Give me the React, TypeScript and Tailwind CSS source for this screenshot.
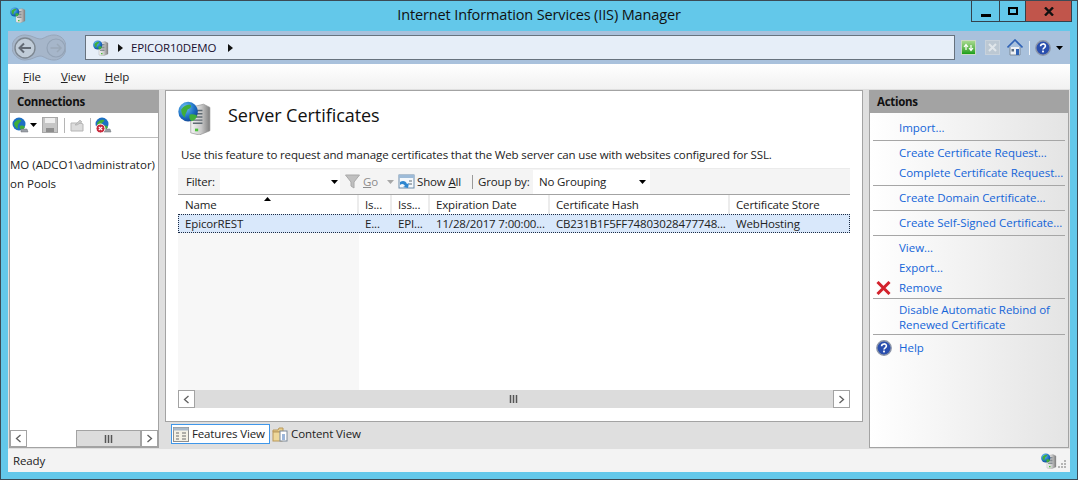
import React from "react";

function Server({ s = 16 }: { s?: number }) {
  return (
    <svg width={s} height={s} viewBox="0 0 32 32" className="shrink-0">
      <defs>
        <linearGradient id="srv" x1="0" x2="1" y1="0" y2="0">
          <stop offset="0" stopColor="#f4f4f4" />
          <stop offset="0.55" stopColor="#c9c9c9" />
          <stop offset="1" stopColor="#7e7e7e" />
        </linearGradient>
        <radialGradient id="glb" cx="0.35" cy="0.3" r="0.8">
          <stop offset="0" stopColor="#6fc4f5" />
          <stop offset="0.6" stopColor="#1d6fc4" />
          <stop offset="1" stopColor="#123f8a" />
        </radialGradient>
      </defs>
      <path d="M12 6 L24 3 L30 6 L30 28 L20 32 L12 30 Z" fill="url(#srv)" stroke="#8c8c8c" strokeWidth="0.6" />
      <path d="M14 9h9M14 12h9M14 15h9M14 18h9M14 21h9" stroke="#5e6a72" strokeWidth="1.3" />
      <rect x="16" y="26" width="3" height="2.5" fill="#4cc23a" />
      <circle cx="9.5" cy="10" r="9.2" fill="url(#glb)" />
      <path d="M3 8c3-4 7-5 9-4 1 2-1 3-3 4-1 3-3 5-2 8-3-2-4-5-4-8ZM11 13c3-1 6 0 7 1-1 3-3 4-5 5-2-1-3-4-2-6Z" fill="#3fae3a" />
    </svg>
  );
}

function Globe({ x = false }: { x?: boolean }) {
  return (
    <svg width="17" height="17" viewBox="0 0 17 17" className="shrink-0">
      <circle cx="7" cy="7" r="6.5" fill="#1d6fc4" />
      <path d="M2 6c2-3 5-4 7-3 1 1-1 2-2 3-1 2-2 3-1 6-2-1-4-3-4-6ZM8 9c2-1 4 0 5 1-1 2-2 3-4 3-1-1-2-3-1-4Z" fill="#3fae3a" />
      <path d="M9 12h6l1 3H9Z" fill="#9a9fa6" stroke="#6d7278" strokeWidth="0.5" />
      {x && (
        <g>
          <circle cx="5.5" cy="11.5" r="4.5" fill="#c8283a" stroke="#fff" />
          <path d="M3.8 9.8l3.4 3.4M7.2 9.8l-3.4 3.4" stroke="#fff" strokeWidth="1.2" />
        </g>
      )}
    </svg>
  );
}

function Sep() {
  return <div className="mx-[3px] h-px bg-[#a6a6a6]" />;
}

function Action({ children, h = 20, icon }: { children: React.ReactNode; h?: number; icon?: React.ReactNode }) {
  return (
    <div className="flex items-center pl-[6px]" style={{ height: h }}>
      <div className="w-[23px] shrink-0 flex items-center">{icon}</div>
      <span className="text-[#1565d8] whitespace-nowrap tracking-[-0.03px]">{children}</span>
    </div>
  );
}

function Help({ s = 16 }: { s?: number }) {
  return (
    <svg width={s} height={s} viewBox="0 0 16 16" className="shrink-0">
      <circle cx="8" cy="8" r="7.2" fill="#2a4fae" stroke="#8d96a8" strokeWidth="1.4" />
      <path d="M5.6 6.2c0-3 4.8-3 4.8-.2 0 1.8-2.4 1.8-2.4 3.6" fill="none" stroke="#fff" strokeWidth="1.6" />
      <rect x="7.1" y="10.6" width="1.8" height="1.8" fill="#fff" />
    </svg>
  );
}

function Head({ w, children, first = false }: { w: number; children: string; first?: boolean }) {
  return (
    <div className={`h-full shrink-0 flex items-center border-r-2 border-[#ececec] ${first ? "pl-[7px]" : "pl-[6px]"}`} style={{ width: w }}>
      {children}
    </div>
  );
}

function Cell({ w, children }: { w: number; children: string }) {
  return (
    <div className="shrink-0 pl-[6px] whitespace-nowrap leading-[17px]" style={{ width: w }}>
      {children}
    </div>
  );
}

function ScrollBtn({ dir }: { dir: "l" | "r" }) {
  return (
    <div className="h-full w-[17px] shrink-0 bg-white border border-[#a3a3a3] flex items-center justify-center">
      <svg width="7" height="9" viewBox="0 0 7 9">
        <path d={dir === "l" ? "M5.5 1 L1.5 4.5 L5.5 8" : "M1.5 1 L5.5 4.5 L1.5 8"} fill="none" stroke="#606060" strokeWidth="1.3" />
      </svg>
    </div>
  );
}

function Grip() {
  return (
    <svg width="9" height="8" viewBox="0 0 9 8">
      <path d="M1.5 0v8M4.5 0v8M7.5 0v8" stroke="#555" strokeWidth="1.5" />
    </svg>
  );
}

function Caret({ c = "#000", up = false }: { c?: string; up?: boolean }) {
  return (
    <svg width="7" height="4" viewBox="0 0 7 4" className="shrink-0">
      <path d={up ? "M0 4h7L3.5 0Z" : "M0 0h7L3.5 4Z"} fill={c} />
    </svg>
  );
}

function CrumbArrow() {
  return (
    <svg width="5" height="8" viewBox="0 0 5 8" className="shrink-0">
      <path d="M0 0l5 4-5 4Z" fill="#111" />
    </svg>
  );
}

export default function App() {
  return (
    <div
      className="w-[1078px] h-[480px] bg-[#63c8ea] border border-[#3b4a55] flex flex-col overflow-hidden text-[11.5px] tracking-[-0.15px] leading-none text-[#1b1b1b]"
      style={{ fontFamily: '"Open Sans", "Noto Sans", sans-serif' }}
    >
      {/* title bar */}
      <div className="h-[30px] shrink-0 flex">
        <div className="w-[106px] pl-[9px] pt-[6px]">
          <Server s={16} />
        </div>
        <div className="flex-1 text-center text-[14.5px] tracking-[-0.14px] pt-[7px] text-[#111]">Internet Information Services (IIS) Manager</div>
        <div className="w-[106px]">
          <div className="flex h-[21px] w-[101px] border border-t-0 border-[#33414c]">
            <div className="w-[28px] border-r border-[#33414c] flex items-center justify-center pt-[3px]">
              <div className="w-[10px] h-[3px] bg-black mt-[6px]" />
            </div>
            <div className="w-[26px] border-r border-[#33414c] flex items-center justify-center">
              <div className="w-[10px] h-[8px] border-2 border-black" />
            </div>
            <div className="flex-1 bg-[#c1554b] flex items-center justify-center">
              <svg width="10" height="9" viewBox="0 0 10 9">
                <path d="M1 0.5 L9 8.5 M9 0.5 L1 8.5" stroke="#111" strokeWidth="2.4" />
              </svg>
            </div>
          </div>
        </div>
      </div>

      {/* inner window */}
      <div className="flex-1 mx-[7px] mb-[7px] flex flex-col min-h-0">
        {/* nav */}
        <div className="h-[33px] shrink-0 bg-[#a9c1dc] flex items-center pl-[4px] pr-[7px]">
          <svg width="54" height="27" viewBox="0 0 54 27" className="shrink-0">
            <path d="M13 1c7 0 11 4 15 4 4 0 7-4 14-4 7 0 12 5 12 12.500 0 7-5 12.500-12 12.500-7 0-10-4-14-4-4 0-8 4-15 4C6 26 0 20 0 13.500 0 6 6 1 13 1Z" fill="#a6b6ca" stroke="#97a6ba" />
            <circle cx="13" cy="14" r="10" fill="#c0ccd8" stroke="#7d8791" strokeWidth="1.4" />
            <path d="M19 14H8M12 9.500 L7.500 14 L12 18.500" fill="none" stroke="#626a74" strokeWidth="2" />
            <circle cx="44" cy="14" r="9" fill="none" stroke="#93a3b6" strokeWidth="1.2" />
            <path d="M38.500 14h10M45 10l4 4-4 4" fill="none" stroke="#9aa8b8" strokeWidth="1.5" />
          </svg>
          <div className="ml-[19px] flex-1 h-[25px] bg-[#e6eef8] border border-[#67727e] flex items-center pl-[7px] gap-[9px]">
            <Server s={16} />
            <CrumbArrow />
            <span className="text-[#1a1030] mx-[-1px]">EPICOR10DEMO</span>
            <span className="ml-[4px]"><CrumbArrow /></span>
          </div>
          <div className="ml-[6px] flex items-center">
            <div className="w-[15px] h-[15px] bg-gradient-to-b from-[#a5d98d] to-[#12a012] border border-[#c9d9c4] flex items-center justify-center">
              <svg width="11" height="9" viewBox="0 0 11 9">
                <path d="M1 4 L3 1.500 L5 4M3 1.500V7M6 5 L8 7.500 L10 5M8 7.500V2" fill="none" stroke="#fff" strokeWidth="1.2" />
              </svg>
            </div>
            <div className="ml-[9px] w-[15px] h-[15px] bg-[#bcc8d3] border border-[#c8d2dc] flex items-center justify-center">
              <svg width="9" height="9" viewBox="0 0 9 9">
                <path d="M1 1l7 7M8 1l-7 7" stroke="#e0e6eb" strokeWidth="2" />
              </svg>
            </div>
            <svg width="16" height="17" viewBox="0 0 16 17" className="shrink-0 ml-[7px]">
              <path d="M3 8v8h10V8" fill="#eef1f5" stroke="#7d8a99" />
              <path d="M0.500 8.500 L8 1 L15.500 8.500" fill="none" stroke="#2f62b5" strokeWidth="1.6" />
              <rect x="9" y="10" width="3" height="6" fill="#2f62b5" />
              <rect x="4.500" y="10" width="2.500" height="2.500" fill="#5a6b80" />
            </svg>
            <div className="w-px h-[14px] bg-[#f0f4f8] ml-[6px]" />
            <div className="ml-[5px]"><Help s={16} /></div>
            <div className="ml-[5px]"><Caret /></div>
          </div>
        </div>

        {/* menu */}
        <div className="h-[25px] shrink-0 bg-gradient-to-b from-white to-[#f1f1f1] flex items-center pl-[15px] gap-[20px] text-[#222] tracking-[-0.08px]">
          <span><u>F</u>ile</span>
          <span><u>V</u>iew</span>
          <span className="ml-[-1px]"><u>H</u>elp</span>
        </div>

        {/* main */}
        <div className="flex-1 bg-[#dfdfdf] flex min-h-0 p-px">
          {/* connections */}
          <div className="w-[150px] shrink-0 border border-[#a3a3a3] flex flex-col bg-white">
            <div className="h-[22px] shrink-0 bg-[#a3a3a3] flex items-center pl-[7px] font-bold text-[#111] tracking-[-0.3px]">Connections</div>
            <div className="h-[25px] shrink-0 border-b border-[#bdbdbd] flex items-center pl-[2px]">
              <Globe />
              <span className="ml-px"><Caret /></span>
              <div className="ml-[5px] w-[16px] h-[16px] bg-[#c5c5c5] border border-[#a8a8a8] flex flex-col items-center justify-between">
                <div className="w-[10px] h-[5px] bg-[#eee]" />
                <div className="w-[8px] h-[4px] bg-[#8e8e8e]" />
              </div>
              <div className="ml-[6px] w-px h-[15px] bg-[#b5b5b5]" />
              <svg width="15" height="14" viewBox="0 0 15 14" className="ml-[5px] shrink-0">
                <path d="M1 5h9l3 1v7H1Z" fill="#dcdcdc" stroke="#b5b5b5" />
                <path d="M5 7l5-5 2 2-5 3Z" fill="#c8c8c8" stroke="#aaa" strokeWidth="0.6" />
              </svg>
              <div className="ml-[5px] w-px h-[15px] bg-[#b5b5b5]" />
              <div className="ml-[4px]"><Globe x /></div>
            </div>
            <div className="flex-1 pt-[17px] overflow-hidden whitespace-nowrap text-[#222] tracking-[0px]">
              <div className="h-[19px] flex items-center">MO (ADCO1\administrator)</div>
              <div className="h-[19px] flex items-center">on Pools</div>
            </div>
            <div className="h-[17px] shrink-0 flex items-center bg-[#dcdcdc]">
              <ScrollBtn dir="l" />
              <div className="w-[49px] h-full bg-white" />
              <div className="flex-1 h-full border border-[#a3a3a3] flex items-center justify-center"><Grip /></div>
              <ScrollBtn dir="r" />
            </div>
          </div>

          {/* center */}
          <div className="flex-1 flex flex-col ml-[6px] min-w-0">
            <div className="h-[332px] shrink-0 bg-white border border-[#a3a3a3] pl-[12px] pr-[12px] flex flex-col">
              <div className="h-[55px] shrink-0 flex items-center pt-[6px] pb-[7px]">
                <Server s={34} />
                <span className="ml-[16px] mb-[6px] text-[18px] tracking-[-0.05px] text-[#111]">Server Certificates</span>
              </div>
              <div className="h-[17px] pl-[3px] flex items-center text-[#222] whitespace-nowrap tracking-[-0.14px]">
                Use this feature to request and manage certificates that the Web server can use with websites configured for SSL.
              </div>
              <div className="mt-[5px] h-[26px] shrink-0 bg-[#f4f4f4] border-t border-[#ebebeb] flex items-center pl-[8px] text-[#222]">
                <span className="w-[29px]">Filter:</span>
                <div className="ml-[5px] w-[120px] h-[24px] bg-white flex items-center justify-end pr-[2px]"><Caret /></div>
                <svg width="15" height="15" viewBox="0 0 15 15" className="ml-[5px] shrink-0">
                  <path d="M0.500 1h14L9 8v6L6 12V8Z" fill="#bfbfbf" stroke="#a8a8a8" />
                </svg>
                <span className="ml-[3px] w-[15px] text-[#8c8c8c]"><u>G</u>o</span>
                <span className="ml-[9px]"><Caret c="#a8a8a8" /></span>
                <svg width="17" height="16" viewBox="0 0 17 16" className="ml-[4px] shrink-0">
                  <rect x="1" y="1" width="15" height="13" fill="#f4f8fc" stroke="#6d8caa" />
                  <rect x="1" y="1" width="15" height="3" fill="#9dbbd8" />
                  <path d="M2 8c3-2 6-1 7 2l2-1-1 5-5-1 2-1c-1-2-3-3-5-1Z" fill="#2e86d0" />
                  <path d="M11 7h3M11 10h3" stroke="#5d6a75" />
                </svg>
                <span className="ml-[2px] w-[46px] whitespace-nowrap">Show <u>A</u>ll</span>
                <div className="ml-[9px] w-px h-[14px] bg-[#9a9a9a]" />
                <span className="ml-[5px] w-[53px] whitespace-nowrap">Group by:</span>
                <div className="ml-[2px] w-[117px] h-[24px] bg-white flex items-center pl-[6px] justify-between pr-[4px]">
                  <span>No Grouping</span>
                  <Caret />
                </div>
              </div>
              <div className="h-[20px] shrink-0 border-t border-[#a3a3a3] flex text-[#222] relative">
                <Head w={181} first>Name</Head>
                <Head w={33}>Is...</Head>
                <Head w={38}>Iss...</Head>
                <Head w={120}>Expiration Date</Head>
                <Head w={180}>Certificate Hash</Head>
                <div className="h-full flex-1 flex items-center pl-[6px]">Certificate Store</div>
                <div className="absolute left-[86px] top-[2px]"><Caret up /></div>
              </div>
              <div className="h-[19px] shrink-0 bg-[#d9e8fb] border border-dotted border-[#1c2b44] flex items-center text-[#222]">
                <Cell w={180}>EpicorREST</Cell>
                <Cell w={33}>E...</Cell>
                <Cell w={38}>EPI...</Cell>
                <Cell w={120}>11/28/2017 7:00:00...</Cell>
                <Cell w={180}>CB231B1F5FF74803028477748...</Cell>
                <Cell w={110}>WebHosting</Cell>
              </div>
              <div className="flex-1 flex min-h-0">
                <div className="w-[181px] bg-[#f7f7f7]" />
              </div>
              <div className="h-[18px] shrink-0 flex items-center bg-[#dcdcdc] mb-[13px]">
                <ScrollBtn dir="l" />
                <div className="flex-1 h-full flex items-center justify-center pr-[2px]"><Grip /></div>
                <ScrollBtn dir="r" />
              </div>
            </div>
            <div className="flex-1 flex items-start pt-[2px] pl-[6px]">
              <div className="h-[20px] w-[99px] bg-white border border-[#3f97ea] flex items-center pl-px gap-[3px] text-[#222] whitespace-nowrap">
                <svg width="16" height="15" viewBox="0 0 16 15" className="shrink-0">
                  <rect x="0.500" y="0.500" width="15" height="14" fill="#f4f1e6" stroke="#8e8e8e" />
                  <rect x="0.500" y="0.500" width="15" height="3" fill="#a9b9c9" />
                  <path d="M3 6h3M3 9h3M3 12h3M9 6h4M9 9h4M9 12h4" stroke="#6b6b6b" />
                </svg>
                <span>Features View</span>
              </div>
              <div className="h-[20px] ml-[2px] flex items-center gap-[3px] text-[#222] whitespace-nowrap tracking-[-0.1px]">
                <svg width="16" height="16" viewBox="0 0 16 16" className="shrink-0">
                  <path d="M1 4h5l1-2h4v4H1Z" fill="#e8cf8a" stroke="#b9985a" />
                  <rect x="1" y="6" width="9" height="9" fill="#eed89a" stroke="#b9985a" />
                  <rect x="8" y="5" width="7" height="10" fill="#fff" stroke="#7d8a99" />
                  <path d="M10 9h3M10 11h3M10 13h3" stroke="#3b6fb5" />
                </svg>
                <span>Content View</span>
              </div>
            </div>
          </div>

          {/* actions */}
          <div className="w-[200px] ml-[6px] shrink-0 border border-[#a3a3a3] flex flex-col bg-gradient-to-r from-white to-[#e4e4e4]">
            <div className="h-[22px] shrink-0 bg-[#a3a3a3] flex items-center pl-[7px] font-bold text-[#111] tracking-[-0.3px]">Actions</div>
            <div className="pt-[5px]">
              <Action>Import...</Action>
              <div className="h-[2px]" />
              <Sep />
              <div className="h-[2px]" />
              <Action>Create Certificate Request...</Action>
              <Action>Complete Certificate Request...</Action>
              <div className="h-[2px]" />
              <Sep />
              <div className="h-[2px]" />
              <Action>Create Domain Certificate...</Action>
              <div className="h-[2px]" />
              <Sep />
              <div className="h-[2px]" />
              <Action>Create Self-Signed Certificate...</Action>
              <div className="h-[2px]" />
              <Sep />
              <div className="h-[2px]" />
              <Action>View...</Action>
              <Action>Export...</Action>
              <Action
                icon={
                  <svg width="15" height="14" viewBox="0 0 15 14">
                    <path d="M1.500 1 L13.500 13 M13.500 1 L1.500 13" stroke="#d3222c" strokeWidth="3" />
                  </svg>
                }
              >
                Remove
              </Action>
              <Sep />
              <div className="pl-[29px] pt-[3px] text-[#1565d8] leading-[15px] pb-[2px] tracking-[-0.03px]">
                <div>Disable Automatic Rebind of</div>
                <div>Renewed Certificate</div>
              </div>
              <Sep />
              <div className="h-[3px]" />
              <Action icon={<Help s={16} />}>Help</Action>
            </div>
          </div>
        </div>

        {/* status */}
        <div className="h-[23px] shrink-0 bg-[#f3f3f3] flex items-center justify-between pl-[5px] pr-[3px] text-[#222]">
          <span>Ready</span>
          <div className="flex items-end">
            <Server s={16} />
            <svg width="9" height="9" viewBox="0 0 9 9" className="ml-px">
              <path d="M6 0h2v2H6ZM3 3h2v2H3ZM6 3h2v2H6ZM0 6h2v2H0ZM3 6h2v2H3ZM6 6h2v2H6Z" fill="#b5b5b5" />
            </svg>
          </div>
        </div>
      </div>
    </div>
  );
}
